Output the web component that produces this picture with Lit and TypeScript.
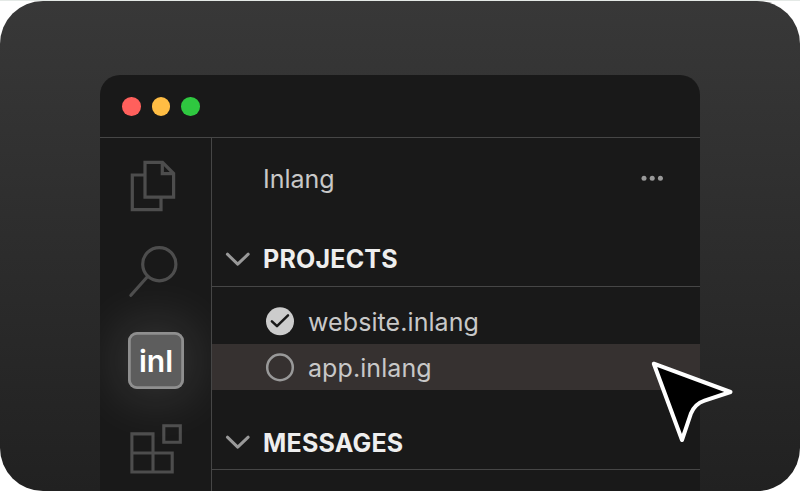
import { LitElement, html, css, svg } from "lit";
import { customElement } from "lit/decorators.js";

const chevron = html`<svg class="chevron" width="26" height="18" viewBox="0 0 26 18">
  <path d="M2.4 4.2 L12.7 14.2 L23.2 4.2" fill="none" stroke="#999" stroke-width="3" stroke-linecap="round" stroke-linejoin="round" />
</svg>`;

const checked = svg`<circle cx="15" cy="15.3" r="14" fill="#ccc" />
  <path d="M6.9 15.3 L12 20.2 L23 9.4" fill="none" stroke="#191919" stroke-width="2.5" stroke-linecap="round" stroke-linejoin="round" />`;
const unchecked = svg`<circle cx="15" cy="15.4" r="12.8" fill="none" stroke="#999" stroke-width="2.5" />`;

@customElement("app-root")
export class AppRoot extends LitElement {
  static styles = css`
    :host { display: block; width: 800px; height: 491px; background: #fff; overflow: hidden; font-family: Inter, "Liberation Sans", sans-serif; }
    * { box-sizing: border-box; }
    .stage { position: relative; display: flex; flex-direction: column; align-items: center; height: 491px; padding-top: 74px; border-top: 1px solid #e4e9e6; }
    .backdrop { position: absolute; inset: 0; border-radius: 43px; background: linear-gradient(#383838, #212121); }
    .window { position: relative; width: 600px; height: 416px; display: flex; flex-direction: column; background: #191919; border-radius: 20px 20px 0 0; overflow: hidden; }
    .titlebar { flex: none; height: 63px; display: flex; align-items: center; gap: 10.8px; padding: 1px 0 0 22.3px; border-bottom: 1px solid #464646; }
    .dot { width: 18.6px; height: 18.6px; border-radius: 50%; }
    .red { background: #ff605c; }
    .amber { background: #ffbd44; }
    .green { background: #2fc840; }
    .body { flex: 1; min-height: 0; display: flex; }
    .rail { position: relative; flex: none; width: 112px; border-right: 1px solid #464646; display: flex; flex-direction: column; align-items: flex-start; overflow: hidden; }
    .rail svg { flex: none; display: block; margin-left: 26px; }
    .rail .files { margin-top: 18px; }
    .rail .search { margin-top: 26px; }
    .logo { position: relative; flex: none; width: 56px; height: 56.5px; margin: 30px 0 0 28px; border-radius: 9px; background: #5d5d5d; display: flex; align-items: center; justify-content: center; color: #fff; font-size: 30px; font-weight: 600; line-height: 51px; padding: 2px 0 0 0; box-shadow: inset 0 0 0 2.8px #8f8f8f, 0 0 58px 4px rgba(255, 255, 255, .17); }
    .rail .blocks { margin-top: 30.5px; }
    .main { flex: 1; min-width: 0; display: flex; flex-direction: column; color: #c8c8c8; font-size: 25px; font-weight: 400; }
    .head { flex: none; height: 94px; display: flex; justify-content: space-between; align-items: flex-start; padding: 26px 37px 0 51px; line-height: 30px; }
    .more { margin-top: 11px; }
    .section { flex: none; height: 55px; display: flex; align-items: center; padding-left: 13px; border-bottom: 1px solid #464646; color: #eee; font-weight: 700; }
    .section .label { margin-left: 12px; letter-spacing: .2px; }
    .section.lower .label { padding-top: 2px; }
    .list { flex: none; height: 128px; padding-top: 11.3px; }
    .row { height: 46px; display: flex; align-items: center; gap: 14px; padding-left: 52.5px; }
    .row span { padding-top: 2px; margin-left: -.5px; letter-spacing: .08px; }
    .active { background: #363130; }
    .cursor { position: absolute; left: 646px; top: 355px; }
  `;

  render() {
    return html`<div class="stage">
      <div class="backdrop"></div>
      <div class="window">
        <div class="titlebar"><span class="dot red"></span><span class="dot amber"></span><span class="dot green"></span></div>
        <div class="body">
          <div class="rail">
            <svg class="files" width="60" height="60" viewBox="126 156 60 60" fill="none" stroke="#4d4d4d" stroke-width="3.2">
              <path d="M144.5 175 H132.3 V209.6 H161 V198" />
              <path d="M145 162.3 H162.5 L173.6 173.5 V197.2 H145 Z" />
              <path d="M162.3 162.3 V173.6 H173.6" />
            </svg>
            <svg class="search" width="60" height="60" viewBox="126 242 60 60" fill="none" stroke="#4d4d4d" stroke-width="3.2" stroke-linecap="round">
              <circle cx="159.3" cy="264.2" r="16.6" />
              <path d="M147.4 276.8 L130.9 295.2" />
            </svg>
            <div class="logo">inl</div>
            <svg class="blocks" width="60" height="60" viewBox="126 419 60 60" fill="none" stroke="#4d4d4d" stroke-width="3.1">
              <path d="M131.9 433.9 H153 V472 H131.9 Z M131.9 453 H172.2 V472 H153" />
              <path d="M163.8 425.7 H180.3 V442.2 H163.8 Z" />
            </svg>
          </div>
          <div class="main">
            <div class="head">
              <span>Inlang</span>
              <svg class="more" width="22" height="8" viewBox="0 0 22 8" fill="#999"><circle cx="3" cy="3.3" r="2.5" /><circle cx="11.2" cy="3.3" r="2.5" /><circle cx="19.4" cy="3.3" r="2.5" /></svg>
            </div>
            <div class="section">${chevron}<span class="label">PROJECTS</span></div>
            <div class="list">
              <div class="row"><svg width="30" height="30">${checked}</svg><span>website.inlang</span></div>
              <div class="row active"><svg width="30" height="30">${unchecked}</svg><span>app.inlang</span></div>
            </div>
            <div class="section lower">${chevron}<span class="label">MESSAGES</span></div>
          </div>
        </div>
      </div>
      <svg class="cursor" width="96" height="96" viewBox="646 356 96 96">
        <path d="M653.8 363.7 L730.5 392 L704.5 400.7 Q694.7 404 690.8 413.8 L682 440 Z" fill="#000" stroke="#fff" stroke-width="4" stroke-linejoin="round" />
      </svg>
    </div>`;
  }
}
